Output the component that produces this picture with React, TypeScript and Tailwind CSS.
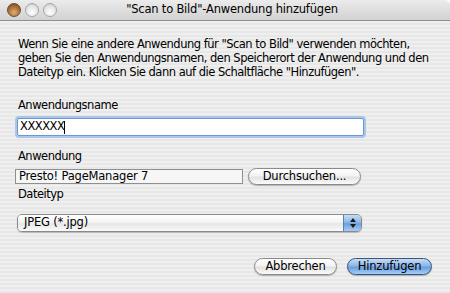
import React from "react";

const font = "font-['DejaVu_Sans','Lucida_Grande',sans-serif]";
const txt = "text-[11.5px] tracking-[-0.2px]";
const bodyTxt = "text-[11.5px] tracking-[-0.5px]";

const Light: React.FC<{ active?: boolean }> = ({ active }) => (
    <div
        className={
            active
                ? "w-[14px] h-[14px] rounded-full border border-[#6b4a2a] bg-[radial-gradient(circle_at_50%_70%,#e0b070_0%,#a86f3a_55%,#6e4420_100%)]"
                : "w-[14px] h-[14px] rounded-full border border-[#a6a6a6] bg-[radial-gradient(circle_at_50%_70%,#ffffff_0%,#e6e6e6_55%,#c4c4c4_100%)]"
        }
    />
);

const AquaButton: React.FC<{ label: string; primary?: boolean; className?: string }> = ({ label, primary, className }) => (
    <button
        className={
            (primary
                ? "border-[#35557f] bg-[linear-gradient(to_bottom,#c7dcf5_0%,#8db7e8_45%,#6a9fdf_55%,#a6cdf5_100%)] "
                : "border-[#8a8a8a] bg-[linear-gradient(to_bottom,#ffffff_0%,#f3f3f3_45%,#e2e2e2_55%,#fbfbfb_100%)] ") +
            "h-[17px] rounded-full border leading-none text-black flex items-center justify-center shadow-[0_1px_1px_rgba(0,0,0,0.25)] " +
            txt +
            " " +
            (className ?? "")
        }
    >
        {label}
    </button>
);

export default function App() {
    return (
        <div className={`w-[450px] h-[293px] overflow-hidden flex flex-col text-black ${font}`}>
            {/* title bar */}
            <div className="h-[21px] shrink-0 relative flex items-center justify-center border-b border-[#8f8f8f] bg-[linear-gradient(to_bottom,#ececec_0%,#dedede_50%,#d2d2d2_100%)] rounded-tr-[5px]">
                <div className="absolute left-[7px] top-[3px] flex gap-[4px]">
                    <Light active />
                    <Light />
                    <Light />
                </div>
                <span className={`${txt} leading-none ml-[14px]`}>"Scan to Bild"-Anwendung hinzufügen</span>
            </div>

            {/* body */}
            <div className="flex-1 flex flex-col px-[18px] pt-[16px] bg-[repeating-linear-gradient(to_bottom,#efefef_0px,#efefef_2px,#e7e7e7_2px,#e7e7e7_4px)]">
                <p className={`${bodyTxt} leading-[14px] whitespace-nowrap`}>
                    Wenn Sie eine andere Anwendung für "Scan to Bild" verwenden möchten,
                    <br />
                    geben Sie den Anwendungsnamen, den Speicherort der Anwendung und den
                    <br />
                    Dateityp ein. Klicken Sie dann auf die Schaltfläche "Hinzufügen".
                </p>

                <div className={`mt-[19px] ${bodyTxt} leading-[14px]`}>Anwendungsname</div>
                <div className="mt-[6px] w-[347px] h-[18px] -ml-[1px] rounded-[2px] border border-[#6d97cf] shadow-[0_0_0_2px_#a9c6ec] bg-white flex items-center px-[2px]">
                    <span className={`${bodyTxt} leading-none`}>XXXXXX</span>
                    <span className="w-px h-[13px] bg-black" />
                </div>

                <div className={`mt-[13px] ${bodyTxt} leading-[14px]`}>Anwendung</div>
                <div className="mt-[5px] flex items-center">
                    <div className={`w-[228px] h-[15px] -ml-[3px] border border-[#8f8f8f] bg-[#f6f6f6] flex items-center px-[3px] ${txt} leading-none`}>
                        Presto! PageManager 7
                    </div>
                    <AquaButton label="Durchsuchen..." className="ml-[5px] w-[113px]" />
                </div>

                <div className={`mt-[2px] ${bodyTxt} leading-[14px]`}>Dateityp</div>
                <div className="mt-[13px] w-[345px] h-[18px] -ml-[1px] flex rounded-[5px] border border-[#8a8a8a] overflow-hidden shadow-[0_1px_1px_rgba(0,0,0,0.2)]">
                    <div className={`flex-1 flex items-center pl-[6px] ${txt} leading-none bg-[linear-gradient(to_bottom,#ffffff_0%,#f4f4f4_45%,#e6e6e6_55%,#fafafa_100%)]`}>
                        JPEG (*.jpg)
                    </div>
                    <div className="w-[18px] border-l border-[#5e7fae] flex flex-col items-center justify-center gap-[2px] bg-[linear-gradient(to_bottom,#c7dcf5_0%,#8db7e8_45%,#6a9fdf_55%,#a6cdf5_100%)]">
                        <svg width="6" height="4" viewBox="0 0 6 4"><path d="M3 0L6 4H0Z" fill="#1a1a1a" /></svg>
                        <svg width="6" height="4" viewBox="0 0 6 4"><path d="M0 0H6L3 4Z" fill="#1a1a1a" /></svg>
                    </div>
                </div>

                <div className="mt-[26px] flex justify-end gap-[10px]">
                    <AquaButton label="Abbrechen" className="w-[83px]" />
                    <AquaButton label="Hinzufügen" primary className="w-[85px]" />
                </div>
            </div>
        </div>
    );
}
